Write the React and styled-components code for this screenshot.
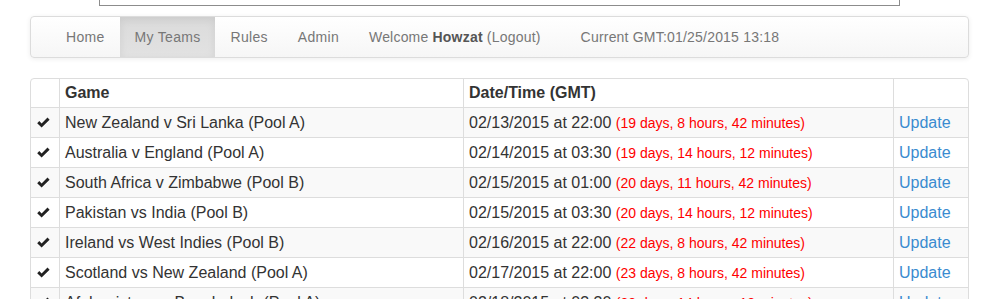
import * as React from 'react';
import styled, {createGlobalStyle} from 'styled-components';

const GlobalStyle = createGlobalStyle`
  html, body {
    margin: 0;
    padding: 0;
    background: #fff;
  }
  body {
    font-family: "Liberation Sans", Arial, sans-serif;
    font-size: 14px;
    line-height: 20px;
    color: #333;
    overflow: hidden;
  }
`;

const Container = styled.div`
  width: 939px;
  margin-left: 30px;
`;

const Banner = styled.div`
  width: 799px;
  height: 100px;
  margin: -96px auto 0;
  border: 1px solid #8c8c8c;
  background: #fff;
`;

const Navbar = styled.nav`
  margin-top: 10px;
  display: flex;
  align-items: stretch;
  padding-left: 20px;
  border: 1px solid #dcdcdc;
  border-radius: 4px;
  background: linear-gradient(to bottom, #ffffff 0%, #f6f6f6 100%);
  box-shadow: inset 0 1px 0 rgba(255, 255, 255, 0.15), 0 1px 5px rgba(0, 0, 0, 0.075);
`;

const NavLink = styled.a`
  display: block;
  padding: 10px 15px;
  line-height: 20px;
  letter-spacing: 0.3px;
  color: #777;
  text-decoration: none;
  background: ${p => (p.$active ? 'linear-gradient(to bottom, #dbdbdb 0%, #e2e2e2 100%)' : 'transparent')};
  box-shadow: ${p => (p.$active ? 'inset 0 3px 9px rgba(0, 0, 0, 0.075)' : 'none')};
`;

const NavText = styled.span`
  display: block;
  padding: 10px 15px;
  line-height: 20px;
  letter-spacing: 0.2px;
  color: #777;
  margin-right: ${p => p.$gap || 0}px;

  b {
    color: #555;
  }
`;

const Panel = styled.div`
  margin-top: 20px;
  border: 1px solid #ddd;
  border-radius: 4px;
  overflow: hidden;
`;

const Table = styled.table`
  width: 100%;
  border-collapse: collapse;
  font-size: 16px;

  th, td {
    border-left: 1px solid #ddd;
    padding: 4px 5px;
    line-height: 21px;
    text-align: left;
    vertical-align: middle;
  }
  th:first-child, td:first-child {
    border-left: 0;
  }
  th {
    font-weight: bold;
    padding-top: 3px;
  }
  tbody td {
    border-top: 1px solid #ddd;
  }
  tbody tr:nth-of-type(odd) {
    background: #f9f9f9;
  }
`;

const CheckCell = styled.td`
  width: 18px;
  text-align: center !important;
`;

const Countdown = styled.span`
  color: #f00;
  font-size: 14px;
  line-height: 1;
`;

const UpdateLink = styled.a`
  color: #3a8bd0;
  text-decoration: none;
`;

const Check = () => (
  <svg width="13" height="11" viewBox="0 0 13 11" style={{display: 'block', margin: '0 0 0 1px'}}>
    <path d="M0.2 6.2 L2.3 4.1 L4.6 6.4 L10.5 0.6 L12.6 2.7 L4.6 10.6 Z" fill="#222" />
  </svg>
);

const games = [
  ['New Zealand v Sri Lanka (Pool A)', '02/13/2015 at 22:00', '(19 days, 8 hours, 42 minutes)'],
  ['Australia v England (Pool A)', '02/14/2015 at 03:30', '(19 days, 14 hours, 12 minutes)'],
  ['South Africa v Zimbabwe (Pool B)', '02/15/2015 at 01:00', '(20 days, 11 hours, 42 minutes)'],
  ['Pakistan vs India (Pool B)', '02/15/2015 at 03:30', '(20 days, 14 hours, 12 minutes)'],
  ['Ireland vs West Indies (Pool B)', '02/16/2015 at 22:00', '(22 days, 8 hours, 42 minutes)'],
  ['Scotland vs New Zealand (Pool A)', '02/17/2015 at 22:00', '(23 days, 8 hours, 42 minutes)'],
  ['Afghanistan vs Bangladesh (Pool A)', '02/18/2015 at 03:30', '(23 days, 14 hours, 12 minutes)'],
];

export default function App () {
  return (
    <>
      <GlobalStyle />
      <Container>
        <Banner />
        <Navbar>
          <NavLink href="#">Home</NavLink>
          <NavLink href="#" $active>My Teams</NavLink>
          <NavLink href="#">Rules</NavLink>
          <NavLink href="#">Admin</NavLink>
          <NavText $gap={10}>Welcome <b>Howzat</b> (Logout)</NavText>
          <NavText>Current GMT:01/25/2015 13:18</NavText>
        </Navbar>
        <Panel>
          <Table>
            <thead>
              <tr>
                <th style={{width: 18}}></th>
                <th style={{width: 393}}>Game</th>
                <th style={{width: 419}}>Date/Time (GMT)</th>
                <th></th>
              </tr>
            </thead>
            <tbody>
              {games.map(([game, date, left]) => (
                <tr key={game}>
                  <CheckCell><Check /></CheckCell>
                  <td>{game}</td>
                  <td>{date} <Countdown>{left}</Countdown></td>
                  <td><UpdateLink href="#">Update</UpdateLink></td>
                </tr>
              ))}
            </tbody>
          </Table>
        </Panel>
      </Container>
    </>
  );
}
